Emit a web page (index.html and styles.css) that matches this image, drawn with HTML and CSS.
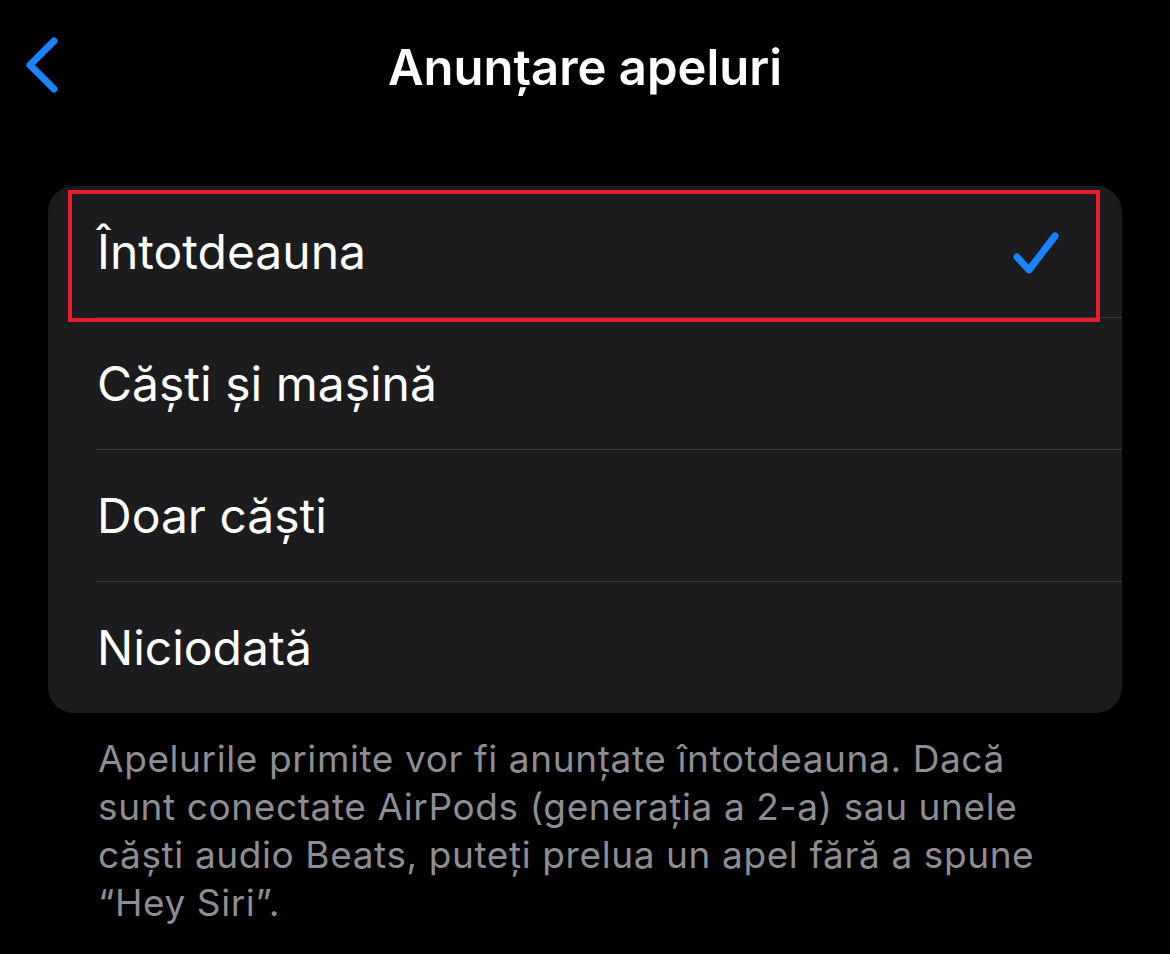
FILE: index.html
```html
<!DOCTYPE html>
<html lang="ro">
<head>
  <meta charset="UTF-8">
  <title>Anunțare apeluri</title>
  <link rel="stylesheet" href="styles.css">
</head>
<body>
  <header class="navbar">
    <button class="back" aria-label="Înapoi">
      <svg width="40" height="60" viewBox="0 0 40 60">
        <path d="M32 6 L8 30 L32 54" fill="none" stroke="#1a84ff" stroke-width="7" stroke-linecap="round" stroke-linejoin="round"/>
      </svg>
    </button>
    <h1 class="title">Anunțare apeluri</h1>
  </header>

  <main class="content">
    <ul class="list">
      <li class="row selected">
        <span class="label">Întotdeauna</span>
        <svg class="check" width="50" height="46" viewBox="0 0 50 46">
          <path d="M5 27 L17 40 L43 6" fill="none" stroke="#1a84ff" stroke-width="7" stroke-linecap="round" stroke-linejoin="round"/>
        </svg>
      </li>
      <li class="row"><span class="label">Căști și mașină</span></li>
      <li class="row"><span class="label">Doar căști</span></li>
      <li class="row"><span class="label">Niciodată</span></li>
    </ul>

    <p class="footer">Apelurile primite vor fi anunțate întotdeauna. Dacă sunt conectate AirPods (generația a 2-a) sau unele căști audio Beats, puteți prelua un apel fără a spune “Hey Siri”.</p>
  </main>
</body>
</html>
```

FILE: styles.css
```css
body {
  margin: 0;
  background: #000;
  color: #fff;
  font-family: Inter, "Noto Sans", sans-serif;
}

.navbar {
  position: relative;
  height: 130px;
  display: flex;
  align-items: center;
  justify-content: center;
}

.back {
  position: absolute;
  left: 22px;
  top: 35px;
  background: none;
  border: 0;
  padding: 0;
}

.title {
  margin: 4px 0 0;
  font-size: 49px;
  font-weight: 600;
  letter-spacing: 0;
}

.content {
  padding: 56px 48px 0;
}

.list {
  list-style: none;
  margin: 0;
  padding: 0;
  background: #1c1c1e;
  border-radius: 26px;
  overflow: hidden;
}

.row {
  position: relative;
  height: 131px;
  display: flex;
  align-items: center;
  justify-content: space-between;
  margin-left: 48px;
  padding-right: 60px;
  border-bottom: 1px solid #38383a;
  font-size: 48px;
}

.row:last-child {
  border-bottom: 0;
}

.label {
  margin-left: 1px;
}

.selected::after {
  content: "";
  position: absolute;
  left: -28px;
  right: 22px;
  top: 4px;
  bottom: -5px;
  border: 4px solid #e3202a;
}

.check {
  margin-top: 2px;
}

.footer {
  margin: 22px 0 0 50px;
  width: 970px;
  font-size: 37px;
  line-height: 48px;
  letter-spacing: 0.6px;
  color: #8d8d93;
}
```
